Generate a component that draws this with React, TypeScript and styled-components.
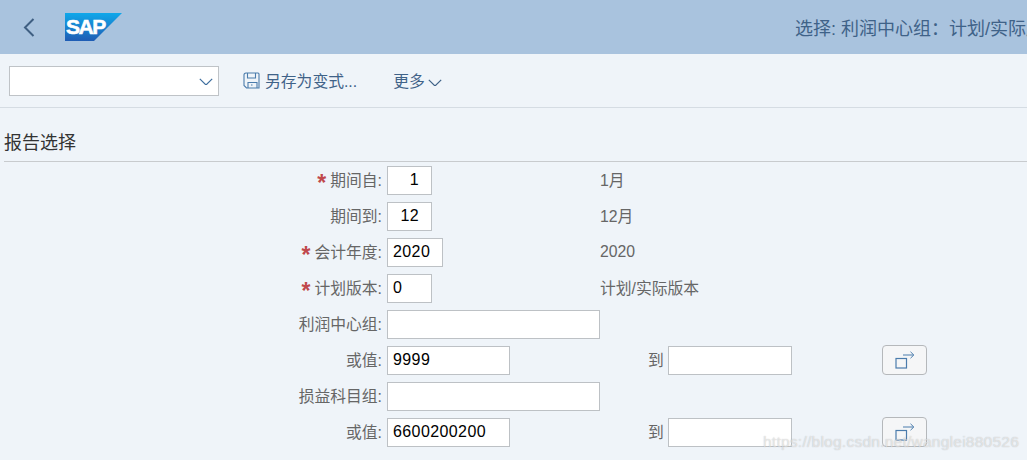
import styled, { createGlobalStyle } from 'styled-components';

const cjk = `"Liberation Sans", "Noto Sans CJK SC", sans-serif`;

const GlobalStyle = createGlobalStyle`
	html, body {
		margin: 0;
		padding: 0;
		background: #eff4f9;
		font-family: ${ cjk };
	}
`;

const Page = styled.div`
	position: relative;
	width: 1027px;
	height: 460px;
	overflow: hidden;
	background: #eff4f9;
`;

const Header = styled.header`
	display: flex;
	align-items: center;
	height: 54px;
	padding-left: 23px;
	box-sizing: border-box;
	background: #a9c3de;
`;

const BackButton = styled.span`
	display: flex;
	width: 42px;
	color: #3f5f82;
`;

const Title = styled.div`
	flex: none;
	width: 232px;
	margin-left: auto;
	overflow: hidden;
	white-space: nowrap;
	font-size: 18px;
	color: #3f6288;
`;

const Toolbar = styled.div`
	display: flex;
	align-items: center;
	height: 54px;
	padding-left: 9px;
	box-sizing: border-box;
	border-bottom: 1px solid #d5dce3;
`;

const VariantSelect = styled.div`
	display: flex;
	align-items: center;
	justify-content: flex-end;
	width: 210px;
	height: 30px;
	padding: 2px 5px 0 0;
	box-sizing: border-box;
	background: #fff;
	border: 1px solid #bfc3c7;
	color: #3f6f9f;
`;

const ToolButton = styled.span<{ $gap: number; $left: number }>`
	display: flex;
	align-items: center;
	gap: ${ (p) => p.$gap }px;
	margin-left: ${ (p) => p.$left }px;
	font-size: 15.8px;
	color: #3f6288;
`;

const ChevronSlot = styled.span`
	display: flex;
	padding-top: 4px;
`;

const SectionTitle = styled.div`
	height: 54px;
	margin-left: 4px;
	padding-top: 22px;
	box-sizing: border-box;
	border-bottom: 1px solid #c8cbce;
	font-size: 18px;
	line-height: 26px;
	color: #333;
`;

const Form = styled.div`
	display: flex;
	flex-direction: column;
	gap: 7px;
	padding-top: 4px;
`;

const Row = styled.div`
	display: grid;
	grid-template-columns: 387px 213px 1fr;
	align-items: center;
	height: 29px;
`;

const Label = styled.label`
	display: flex;
	align-items: center;
	justify-content: flex-end;
	gap: 4px;
	padding: 0 5px 2px 0;
	font-size: 15.8px;
	color: #666;
`;

const Star = styled.span`
	height: 18px;
	font-size: 23px;
	font-weight: 700;
	line-height: 24px;
	color: #c0484c;
`;

const Input = styled.input<{ $width: number; $right?: boolean }>`
	display: block;
	width: ${ (p) => p.$width }px;
	height: 29px;
	padding: ${ (p) => (p.$right ? '0 12px 2px 0' : '0 0 2px 5px') };
	box-sizing: border-box;
	background: #fff;
	border: 1px solid #bdc1c5;
	border-radius: 0;
	outline: none;
	font-family: ${ cjk };
	font-size: 16px;
	letter-spacing: 0.4px;
	color: #000;
	text-align: ${ (p) => (p.$right ? 'right' : 'left') };
`;

const Description = styled.span`
	padding-bottom: 2px;
	font-size: 15.8px;
	color: #666;
`;

const Range = styled.div`
	display: flex;
	align-items: center;
	padding-left: 48px;
`;

const RangeLabel = styled.span`
	width: 20px;
	padding-bottom: 2px;
	font-size: 15.8px;
	color: #666;
`;

const MultiButton = styled.button`
	display: flex;
	align-items: center;
	justify-content: center;
	width: 45px;
	height: 30px;
	margin: -1px 0 0 90px;
	padding: 0;
	background: #f5f6f7;
	border: 1px solid #b5b8bb;
	border-radius: 4px;
	color: #4b7cac;
`;

const Watermark = styled.div`
	position: absolute;
	left: 763px;
	top: 433px;
	font-family: "Liberation Sans", sans-serif;
	font-size: 15.5px;
	letter-spacing: 0.25px;
	color: rgba(255, 255, 255, 0.55);
	text-shadow: 0 0 1px rgba(90, 90, 90, 0.4);
	white-space: nowrap;
`;

const Chevron = ({ size = 14 }: { size?: number }) => (
	<svg width={ size } height={ size * 0.55 } viewBox='0 0 14 7.7' fill='none' stroke='currentColor' strokeWidth='1.2'>
		<path d='M.8 .8 7 7 13.2 .8' />
	</svg>
);

const BackIcon = () => (
	<svg width='12' height='19' viewBox='0 0 12 19' fill='none' stroke='currentColor' strokeWidth='2'>
		<path d='M10.5 1 2 9.5 10.5 18' />
	</svg>
);

const SapLogo = () => (
	<svg width='57' height='28' viewBox='0 0 57 28'>
		<defs>
			<linearGradient id='sapBlue' x1='0' y1='0' x2='0' y2='1'>
				<stop offset='0' stopColor='#10a8ea' />
				<stop offset='1' stopColor='#1f5cb4' />
			</linearGradient>
		</defs>
		<polygon points='0,0 57,0 29,28 0,28' fill='url(#sapBlue)' />
		<text x='1' y='21' fontFamily='"Liberation Sans", sans-serif' fontSize='21' fontWeight='700' letterSpacing='-1.4' fill='#fff' stroke='#fff' strokeWidth='0.6'>SAP</text>
	</svg>
);

const SaveIcon = () => (
	<svg width='17' height='17' viewBox='0 0 17 17' fill='none' stroke='#4b7cac' strokeWidth='1.1'>
		<path d='M3 1h12a1 1 0 0 1 1 1v14H3.5L1 13.5V3a2 2 0 0 1 2-2Z' />
		<path d='M4.5 1v5h8V1M5 16v-5.5h9V16M8 13h1.5' />
	</svg>
);

const MultiIcon = () => (
	<svg width='20' height='18' viewBox='0 0 20 18' fill='none' stroke='currentColor' strokeWidth='1.2'>
		<rect x='1' y='7.5' width='10.5' height='9.5' />
		<path d='M8 4h10.5M15.5 .8 18.8 4 15.5 7.2' strokeWidth='1' />
	</svg>
);

const App = () => (
	<Page>
		<GlobalStyle />
		<Header>
			<BackButton><BackIcon /></BackButton>
			<SapLogo />
			<Title>选择: 利润中心组：计划/实际版本</Title>
		</Header>
		<Toolbar>
			<VariantSelect><Chevron /></VariantSelect>
			<ToolButton $gap={ 5 } $left={ 24 }><SaveIcon />另存为变式...</ToolButton>
			<ToolButton $gap={ 3 } $left={ 36 }>更多<ChevronSlot><Chevron /></ChevronSlot></ToolButton>
		</Toolbar>
		<SectionTitle>报告选择</SectionTitle>
		<Form>
			<Row>
				<Label><Star>*</Star>期间自:</Label>
				<Input $width={ 45 } $right defaultValue='1' />
				<Description>1月</Description>
			</Row>
			<Row>
				<Label>期间到:</Label>
				<Input $width={ 45 } $right defaultValue='12' />
				<Description>12月</Description>
			</Row>
			<Row>
				<Label><Star>*</Star>会计年度:</Label>
				<Input $width={ 56 } defaultValue='2020' />
				<Description>2020</Description>
			</Row>
			<Row>
				<Label><Star>*</Star>计划版本:</Label>
				<Input $width={ 45 } defaultValue='0' />
				<Description>计划/实际版本</Description>
			</Row>
			<Row>
				<Label>利润中心组:</Label>
				<Input $width={ 213 } />
			</Row>
			<Row>
				<Label>或值:</Label>
				<Input $width={ 123 } defaultValue='9999' />
				<Range>
					<RangeLabel>到</RangeLabel>
					<Input $width={ 124 } />
					<MultiButton><MultiIcon /></MultiButton>
				</Range>
			</Row>
			<Row>
				<Label>损益科目组:</Label>
				<Input $width={ 213 } />
			</Row>
			<Row>
				<Label>或值:</Label>
				<Input $width={ 123 } defaultValue='6600200200' />
				<Range>
					<RangeLabel>到</RangeLabel>
					<Input $width={ 124 } />
					<MultiButton><MultiIcon /></MultiButton>
				</Range>
			</Row>
		</Form>
		<Watermark>https://blog.csdn.net/wanglei880526</Watermark>
	</Page>
);

export default App;
